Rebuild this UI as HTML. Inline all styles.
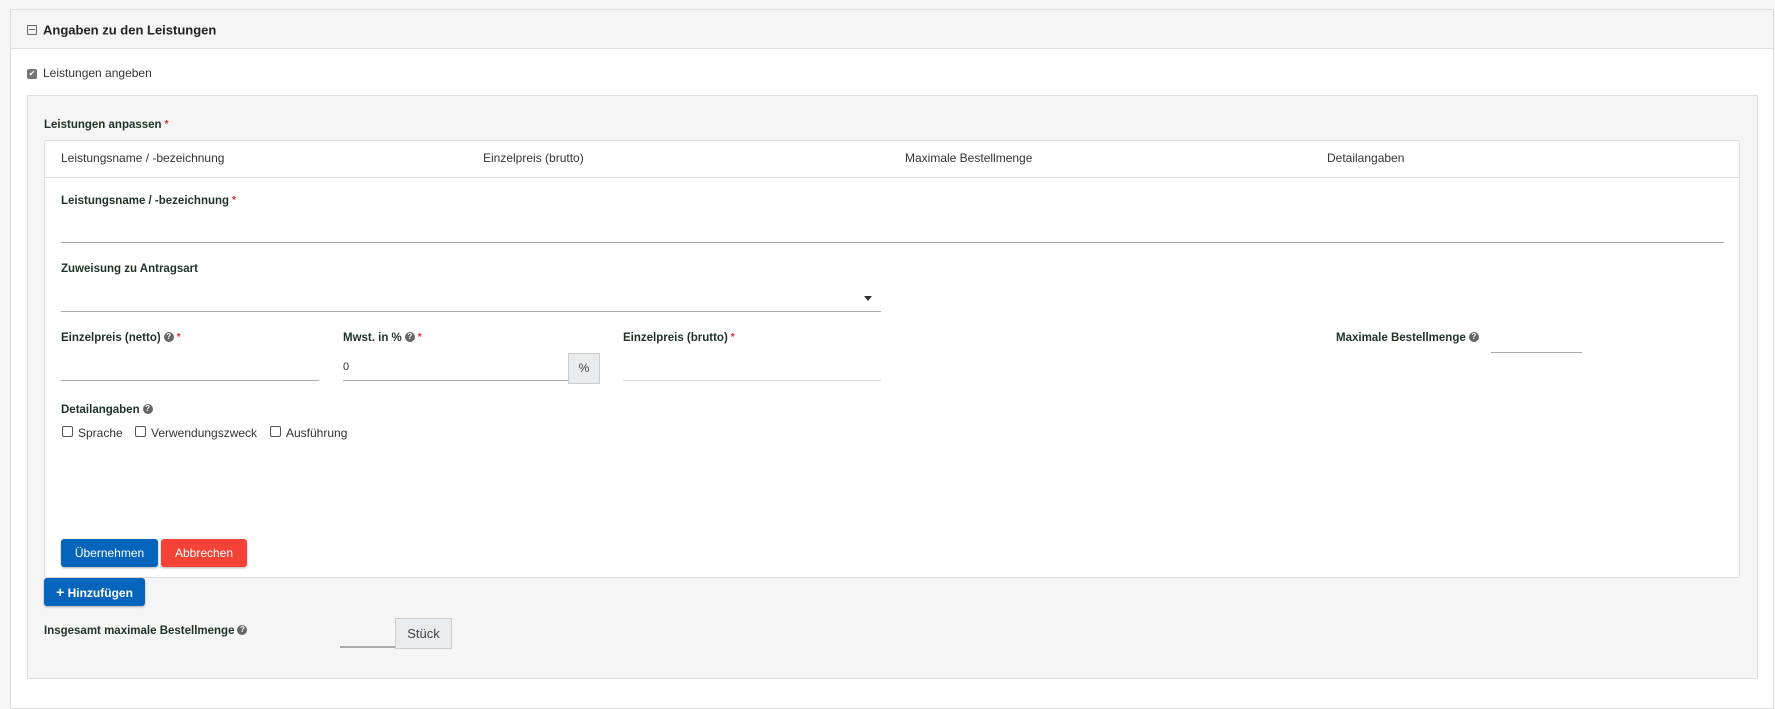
<!DOCTYPE html>
<html><head><meta charset="utf-8"><style>
body{margin:0;width:1775px;height:709px;background:#f5f5f5;font-family:"Liberation Sans",sans-serif;position:relative;overflow:hidden;color:#222}
.a{position:absolute}
.lbl{position:absolute;font-size:11.5px;font-weight:bold;color:#1e3326;white-space:nowrap;transform:translateY(-50%)}
.t{position:absolute;font-size:12px;color:#333;white-space:nowrap;transform:translateY(-50%)}
.req{color:#e0262a;font-size:10px;vertical-align:top;margin-left:3px}
.q{display:inline-block;width:10px;height:10px;border-radius:50%;background:#666;color:#fff;font-size:8px;line-height:10px;text-align:center;vertical-align:middle;margin-left:3px;font-weight:bold;position:relative;top:-1px}
.ul{position:absolute;height:0;border-top:1px solid #aaa}
.cb{position:absolute;width:9px;height:9px;border:1px solid #555;border-radius:2px;background:#fff}
.btn{position:absolute;color:#fff;font-size:12px;text-align:center;border-radius:3px;box-shadow:0 1px 2px rgba(0,0,0,.3)}
</style></head><body>
<div class="a" style="left:10px;top:9px;width:1762px;height:698px;border:1px solid #ddd;background:#fff"></div>
<div class="a" style="left:11px;top:10px;width:1762px;height:38px;background:#f5f5f5;border-bottom:1px solid #ddd"></div>
<div class="a" style="left:27px;top:25px;width:8px;height:8px;border:1px solid #666;border-radius:1px"></div>
<div class="a" style="left:29px;top:29px;width:6px;height:1px;background:#666"></div>
<div class="lbl" style="left:43px;top:30px;font-size:13px;color:#222">Angaben zu den Leistungen</div>
<div class="a" style="left:27px;top:69px;width:10px;height:10px;background:#777;border-radius:2px;color:#fff;font-size:8px;line-height:10px;text-align:center">✔</div>
<div class="t" style="left:43px;top:73px;color:#333;font-size:12px">Leistungen angeben</div>
<div class="a" style="left:27px;top:95px;width:1729px;height:582px;background:#f5f5f5;border:1px solid #ddd"></div>
<div class="lbl" style="left:44px;top:125px">Leistungen anpassen<span class="req">*</span></div>
<div class="a" style="left:44px;top:140px;width:1694px;height:436px;background:#fff;border:1px solid #ddd;border-radius:3px"></div>
<div class="a" style="left:45px;top:177px;width:1694px;height:1px;background:#ddd"></div>
<div class="t" style="left:61px;top:158px">Leistungsname / -bezeichnung</div>
<div class="t" style="left:483px;top:158px">Einzelpreis (brutto)</div>
<div class="t" style="left:905px;top:158px">Maximale Bestellmenge</div>
<div class="t" style="left:1327px;top:158px">Detailangaben</div>
<div class="lbl" style="left:61px;top:201px">Leistungsname / -bezeichnung<span class="req">*</span></div>
<div class="ul" style="left:61px;top:242px;width:1663px"></div>
<div class="lbl" style="left:61px;top:269px">Zuweisung zu Antragsart</div>
<div class="a" style="left:864px;top:296px;border-left:4px solid transparent;border-right:4px solid transparent;border-top:5px solid #333"></div>
<div class="ul" style="left:61px;top:311px;width:820px"></div>
<div class="lbl" style="left:61px;top:338px">Einzelpreis (netto)<span class="q">?</span><span class="req">*</span></div>
<div class="ul" style="left:61px;top:380px;width:258px"></div>
<div class="lbl" style="left:343px;top:338px">Mwst. in %<span class="q">?</span><span class="req">*</span></div>
<div class="t" style="left:343px;top:367px;font-size:11px">0</div>
<div class="ul" style="left:343px;top:380px;width:225px"></div>
<div class="a" style="left:568px;top:353px;width:30px;height:29px;background:#e9ecef;border:1px solid #ccc;font-size:12px;text-align:center;line-height:29px;color:#444">%</div>
<div class="lbl" style="left:623px;top:338px">Einzelpreis (brutto)<span class="req">*</span></div>
<div class="ul" style="left:623px;top:380px;width:258px;border-color:#ddd"></div>
<div class="lbl" style="left:1336px;top:338px">Maximale Bestellmenge<span class="q">?</span></div>
<div class="ul" style="left:1491px;top:352px;width:91px"></div>
<div class="lbl" style="left:61px;top:410px">Detailangaben<span class="q">?</span></div>
<div class="cb" style="left:62px;top:426px"></div><div class="t" style="left:78px;top:433px">Sprache</div>
<div class="cb" style="left:135px;top:426px"></div><div class="t" style="left:151px;top:433px">Verwendungszweck</div>
<div class="cb" style="left:270px;top:426px"></div><div class="t" style="left:286px;top:433px">Ausführung</div>
<div class="btn" style="left:61px;top:539px;width:97px;height:28px;line-height:28px;background:#0565bd">Übernehmen</div>
<div class="btn" style="left:161px;top:539px;width:86px;height:28px;line-height:28px;background:#f44336">Abbrechen</div>
<div class="btn" style="left:44px;top:578px;width:101px;height:28px;line-height:28px;background:#0565bd;font-weight:bold"><b style="font-size:14px">+</b> Hinzufügen</div>
<div class="lbl" style="left:44px;top:631px">Insgesamt maximale Bestellmenge<span class="q">?</span></div>
<div class="ul" style="left:340px;top:646px;width:56px;border-top:2px solid #aaa"></div>
<div class="a" style="left:395px;top:618px;width:55px;height:29px;background:#e9ecef;border:1px solid #ccc;font-size:13px;text-align:center;line-height:29px;color:#444">Stück</div>
</body></html>
